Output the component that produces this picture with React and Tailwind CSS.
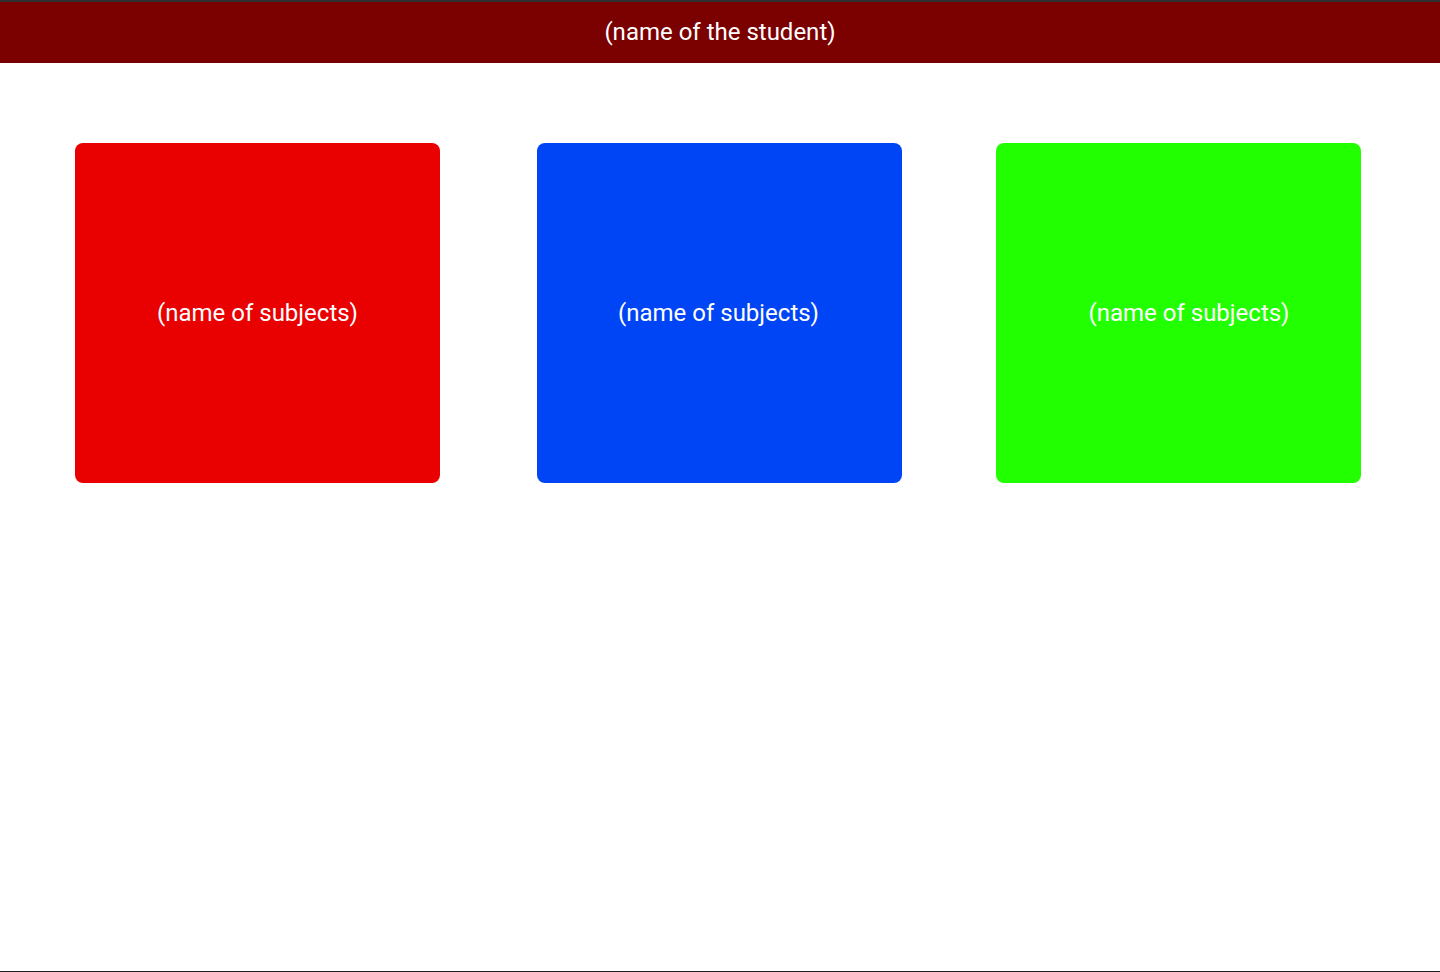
import React from 'react';

const subjects = [
    { name: '(name of subjects)', color: 'bg-[#e90000] mr-[97px]', text: '' },
    { name: '(name of subjects)', color: 'bg-[#0045f5] mr-[94px]', text: 'pr-[2px]' },
    { name: '(name of subjects)', color: 'bg-[#22ff00]', text: 'pl-[21px]' },
];

const SubjectCard = ({ subject }) => (
    <div className={`${subject.color} w-[365px] h-[340px] shrink-0 rounded-lg flex items-center justify-center`}>
        <span className={`text-white text-[24px] ${subject.text}`}>{subject.name}</span>
    </div>
);

const App = () => {
    return (
        <div className="min-h-[972px] bg-white flex flex-col font-['Roboto',sans-serif] border-b border-[#222]">
            <header className="h-[63px] bg-[#7b0000] border-t-2 border-[#303030] pb-[2px] flex items-center justify-center">
                <h1 className="text-white text-[24px] font-normal">(name of the student)</h1>
            </header>
            <main className="flex pl-[75px] pt-[80px]">
                {subjects.map((subject, i) => (
                    <SubjectCard key={i} subject={subject} />
                ))}
            </main>
        </div>
    );
};

export default App;
